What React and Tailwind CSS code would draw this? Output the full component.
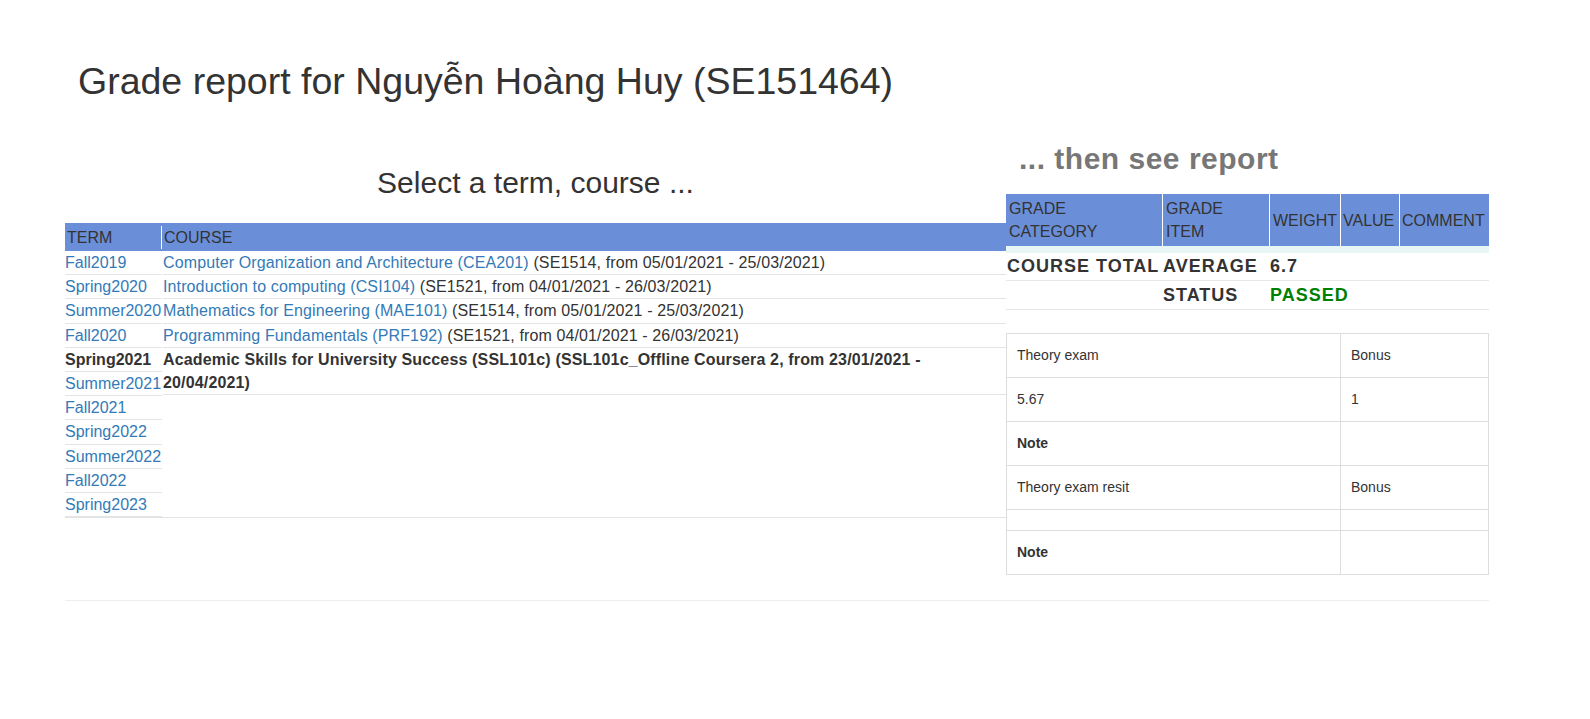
import React from 'react';

const terms = [
    { name: 'Fall2019' },
    { name: 'Spring2020' },
    { name: 'Summer2020' },
    { name: 'Fall2020' },
    { name: 'Spring2021', current: true },
    { name: 'Summer2021' },
    { name: 'Fall2021' },
    { name: 'Spring2022' },
    { name: 'Summer2022' },
    { name: 'Fall2022' },
    { name: 'Spring2023' },
];

const courses = [
    { title: 'Computer Organization and Architecture (CEA201)', info: '(SE1514, from 05/01/2021 - 25/03/2021)' },
    { title: 'Introduction to computing (CSI104)', info: '(SE1521, from 04/01/2021 - 26/03/2021)' },
    { title: 'Mathematics for Engineering (MAE101)', info: '(SE1514, from 05/01/2021 - 25/03/2021)' },
    { title: 'Programming Fundamentals (PRF192)', info: '(SE1521, from 04/01/2021 - 26/03/2021)' },
    { title: 'Academic Skills for University Success (SSL101c)', info: '(SSL101c_Offline Coursera 2, from 23/01/2021 - 20/04/2021)', current: true },
];

const details = [
    { left: 'Theory exam', right: 'Bonus' },
    { left: '5.67', right: '1' },
    { left: 'Note', right: '', bold: true },
    { left: 'Theory exam resit', right: 'Bonus' },
    { left: '', right: '', empty: true },
    { left: 'Note', right: '', bold: true },
];

export default function App() {
    return (
        <div className="min-h-screen bg-white text-[#333] text-[16px] leading-[23px] font-['Liberation_Sans',Arial,sans-serif]">
            <div className="pl-[65px] pr-[101px] pt-[61px]">
                <h1 className="pl-[13px] text-[37.5px] leading-[41px] font-normal">
                    Grade report for Nguyễn Hoàng Huy (SE151464)
                </h1>

                <div className="flex items-start mt-[40px]">
                    {/* left: term + course picker */}
                    <div className="w-[941px] shrink-0">
                        <h2 className="mt-[23.5px] text-center text-[30px] leading-[33px] font-normal">
                            Select a term, course ...
                        </h2>

                        <div className="mt-[24.5px]">
                            <div className="flex bg-[#6a8fd8] h-[28px] items-center">
                                <div className="w-[97px] shrink-0 pl-[2px] border-r border-white">TERM</div>
                                <div className="flex-1 pl-[2px]">COURSE</div>
                            </div>
                            <div className="flex items-start border-b border-[#e4e4e4]">
                                <div className="w-[97px] shrink-0">
                                    {terms.map(t => (
                                        <div key={t.name} className="h-[24.2px] leading-[23.2px] border-b border-[#e4e4e4] whitespace-nowrap">
                                            {t.current
                                                ? <b>{t.name}</b>
                                                : <a href="#" className="text-[#337ab7]">{t.name}</a>}
                                        </div>
                                    ))}
                                </div>
                                <div className="flex-1 pl-[1px] tracking-[0.12px]">
                                    {courses.map(c => (
                                        <div key={c.title} className="leading-[23.2px] border-b border-[#e4e4e4]">
                                            {c.current ? (
                                                <b className="tracking-[0.15px]">{c.title} {c.info}</b>
                                            ) : (
                                                <>
                                                    <a href="#" className="text-[#337ab7]">{c.title}</a> {c.info}
                                                </>
                                            )}
                                        </div>
                                    ))}
                                </div>
                            </div>
                        </div>
                    </div>

                    {/* right: report */}
                    <div className="flex-1">
                        <h2 className="pl-[13px] text-[30px] leading-[33px] font-bold text-[#777] tracking-[0.5px]">
                            ... then see report
                        </h2>

                        <div className="mt-[19px]">
                            <div className="grid grid-cols-[157px_107px_71px_59px_1fr] bg-[#6a8fd8]">
                                <div className="px-[3px] py-[3px] border-r border-white">GRADE<br />CATEGORY</div>
                                <div className="px-[3px] py-[3px] border-r border-white">GRADE<br />ITEM</div>
                                <div className="px-[3px] py-[3px] border-r border-white flex items-center">WEIGHT</div>
                                <div className="px-[2px] py-[3px] border-r border-white flex items-center">VALUE</div>
                                <div className="px-[2px] py-[3px] flex items-center">COMMENT</div>
                            </div>
                            <div className="h-[7px] bg-[#e8f6f6]"></div>
                            <div className="grid grid-cols-[157px_107px_1fr] text-[18px] font-bold tracking-[1px] h-[28px] items-center border-b border-[#e6e6e6]">
                                <div className="pl-[1px] whitespace-nowrap">COURSE TOTAL</div>
                                <div>AVERAGE</div>
                                <div>6.7</div>
                            </div>
                            <div className="grid grid-cols-[157px_107px_1fr] text-[18px] font-bold tracking-[1px] h-[29px] items-center border-b border-[#e6e6e6]">
                                <div></div>
                                <div>STATUS</div>
                                <div className="text-[#008000]">PASSED</div>
                            </div>
                        </div>

                        <table className="mt-[23px] w-full border-collapse border border-[#ddd] text-[14px]">
                            <tbody>
                                {details.map((d, i) => (
                                    <tr key={i}>
                                        <td className={`w-[334px] border border-[#ddd] px-[10px] py-[10px] ${d.empty ? 'leading-[0px]' : 'leading-[23px]'} ${d.bold ? 'font-bold' : ''}`}>
                                            {d.left}
                                        </td>
                                        <td className={`border border-[#ddd] px-[10px] py-[10px] ${d.empty ? 'leading-[0px]' : 'leading-[23px]'}`}>
                                            {d.right}
                                        </td>
                                    </tr>
                                ))}
                            </tbody>
                        </table>
                    </div>
                </div>

                <hr className="mt-[25px] border-0 border-t border-[#eee]" />
            </div>
        </div>
    );
}
